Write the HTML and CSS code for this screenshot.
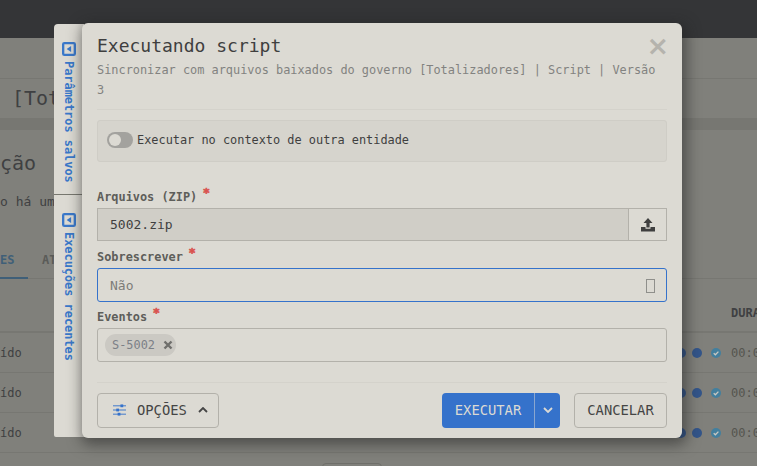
FILE: index.html
```html
<!DOCTYPE html>
<html lang="pt">
<head>
<meta charset="utf-8">
<title>Executando script</title>
<link rel="stylesheet" href="styles.css">
</head>
<body>
<div class="page">
  <header class="topbar"></header>
  <div class="crumbs"></div>
  <div class="page-title">[Totalizadores]</div>
  <div class="band"></div>
  <div class="section-title">ção</div>
  <div class="notice">o há um</div>
  <nav class="tabs"><span class="tab tab-on">ES</span><span class="tab">AT</span></nav>
  <div class="thead"><span>DURAÇÃO</span></div>
  <div class="row"><span>ído</span><span class="cells"><i class="dot"></i><i class="dot"></i><svg class="chk" viewBox="0 0 10 10"><circle cx="5" cy="5" r="5"/><path d="M2.700 5.200l1.700 1.600 3-3.200"/></svg><span class="time">00:00</span></span></div>
  <div class="row"><span>ído</span><span class="cells"><i class="dot"></i><i class="dot"></i><svg class="chk" viewBox="0 0 10 10"><circle cx="5" cy="5" r="5"/><path d="M2.700 5.200l1.700 1.600 3-3.200"/></svg><span class="time">00:00</span></span></div>
  <div class="row"><span>ído</span><span class="cells"><i class="dot"></i><i class="dot"></i><svg class="chk" viewBox="0 0 10 10"><circle cx="5" cy="5" r="5"/><path d="M2.700 5.200l1.700 1.600 3-3.200"/></svg><span class="time">00:00</span></span></div>
  <div class="pager"></div>
</div>

<aside class="side">
  <div class="side-sec side-first">
    <svg class="side-ico" viewBox="0 0 12 12"><rect x="1" y="1" width="10" height="10" rx="1"/><path class="tri" d="M7.800 3.400v5.200L4 6z"/></svg>
    <span class="side-text">Parâmetros salvos</span>
  </div>
  <div class="side-sec">
    <svg class="side-ico" viewBox="0 0 12 12"><rect x="1" y="1" width="10" height="10" rx="1"/><path class="tri" d="M7.800 3.400v5.200L4 6z"/></svg>
    <span class="side-text">Execuções recentes</span>
  </div>
</aside>

<main class="modal">
  <div class="modal-head">
    <h1 class="title">Executando script</h1>
    <span class="close">×</span>
    <p class="sub">Sincronizar com arquivos baixados do governo [Totalizadores] | Script | Versão 3</p>
  </div>
  <div class="ctx">
    <span class="toggle"><i class="knob"></i></span>
    <span>Executar no contexto de outra entidade</span>
  </div>
  <div class="fields">
    <label class="lab">Arquivos (ZIP)<b class="req">*</b></label>
    <div class="file">
      <span class="file-name">5002.zip</span>
      <span class="file-btn"><svg class="up" viewBox="0 0 14 14"><path d="M7 0l4.500 5H8.600v4.500H5.400V5H2.500z"/><path d="M0 9h4.500v1.800h5V9H14v4.500H0z"/></svg></span>
    </div>
    <label class="lab">Sobrescrever<b class="req">*</b></label>
    <div class="select"><span>Não</span><i class="tofu"></i></div>
    <label class="lab">Eventos<b class="req">*</b></label>
    <div class="tags"><span class="chip">S-5002<svg class="x" viewBox="0 0 10 10"><path d="M1.500 1.500l7 7M8.500 1.500l-7 7"/></svg></span></div>
  </div>
  <footer class="foot">
    <button class="btn btn-opt">
      <svg class="sliders" viewBox="0 0 14 12"><path d="M0 1.500h14M0 6h14M0 10.500h14"/><rect x="8" y="0" width="3" height="3"/><rect x="3.500" y="4.500" width="3" height="3"/><rect x="5" y="9" width="3" height="3"/></svg>
      <span>OPÇÕES</span>
      <svg class="chev" viewBox="0 0 10 6"><path d="M1 5l4-4 4 4"/></svg>
    </button>
    <span class="spacer"></span>
    <div class="split">
      <button class="btn-main">EXECUTAR</button>
      <button class="btn-caret"><svg class="chev chev-w" viewBox="0 0 10 6"><path d="M1 1l4 4 4-4"/></svg></button>
    </div>
    <button class="btn btn-cancel">CANCELAR</button>
  </footer>
</main>
</body>
</html>
```

FILE: styles.css
```css
* { box-sizing: border-box; }
html, body { margin: 0; height: 100%; }
body {
  width: 757px;
  height: 466px;
  overflow: hidden;
  position: relative;
  background: #80807b;
  font-family: "DejaVu Sans Mono", monospace;
  color: #3f3f3f;
}

/* dimmed page behind the dialog */
.page { width: 757px; height: 466px; overflow: hidden; color: #3f4042; }
.topbar { height: 38px; background: #343537; }
.crumbs { height: 41px; border-bottom: 1px solid #777772; }
.page-title { height: 39px; padding: 7px 0 0 12px; font-size: 20px; line-height: 24px; }
.band { height: 12px; background: #777772; }
.section-title { height: 56px; padding-top: 21px; font-size: 20px; line-height: 24px; }
.notice { height: 55px; padding-top: 7px; font-size: 13px; line-height: 18px; }
.tabs { display: flex; gap: 14px; height: 38px; padding-top: 10px; border-bottom: 1px solid #777772; font-size: 12px; font-weight: 700; line-height: 18px; }
.tab { color: #5a5b58; }
.tab-on { color: #3f5f78; width: 28px; height: 28px; border-bottom: 2px solid #3f5f78; }
.thead { height: 54px; padding: 25px 0 0 731px; border-bottom: 2px solid #777772; font-size: 12px; font-weight: 700; line-height: 18px; white-space: nowrap; }
.row { display: flex; justify-content: space-between; align-items: center; height: 40px; border-bottom: 1px solid #777772; font-size: 12px; white-space: nowrap; }
.cells { display: flex; align-items: center; gap: 6px; margin-right: -10px; }
.dot { width: 10px; height: 10px; border-radius: 50%; background: #33558a; }
.chk { width: 10px; height: 10px; margin-left: 3px; fill: #437f9e; }
.chk path { fill: none; stroke: #c8c8c2; stroke-width: 1.300; }
.time { margin-left: 4px; width: 36px; color: #55554f; }
.pager { width: 60px; height: 20px; margin: 10px 0 0 322px; border: 1px solid #6f6f6a; border-radius: 4px; }

/* side tabs */
.side {
  position: absolute;
  left: 54px;
  top: 24px;
  width: 30px;
  height: 413px;
  display: flex;
  flex-direction: column;
  background: linear-gradient(90deg, #dcdad3 0, #dcdad3 22px, #d5d3cc 28px);
  border-radius: 4px 0 0 2px;
}
.side-sec { display: flex; flex-direction: column; align-items: flex-start; padding: 18px 0 0 8px; gap: 5px; }
.side-first { height: 171px; border-bottom: 1px solid #77776f; }
.side-ico { width: 14px; height: 14px; stroke: #3a78c9; stroke-width: 2; fill: none; flex: none; }
.side-ico .tri { fill: #3a78c9; stroke: none; }
.side-text {
  margin-left: 1px;
  writing-mode: vertical-rl;
  font-size: 11.900px;
  font-weight: 700;
  line-height: 12px;
  color: #3a78c9;
  white-space: nowrap;
}

/* dialog */
.modal {
  position: absolute;
  left: 82px;
  top: 23px;
  width: 600px;
  height: 415px;
  display: flex;
  flex-direction: column;
  padding: 0 15px;
  background: #dcdad3;
  border-radius: 6px;
  box-shadow: 2px 4px 14px 3px rgba(30, 30, 30, .5);
}
.modal-head { position: relative; height: 87px; padding-top: 12px; border-bottom: 1px solid #d4d2cb; }
.title { margin: 0; font-size: 18px; font-weight: 400; line-height: 22px; color: #3f3f3f; }
.close { position: absolute; right: -2px; top: 8px; font-family: "DejaVu Sans", sans-serif; font-size: 27px; font-weight: 700; line-height: 30px; color: #b5b3ad; }
.sub { margin: 3px 0 0; font-size: 11.900px; line-height: 20px; color: #828280; }
.ctx {
  display: flex;
  align-items: center;
  gap: 4px;
  height: 42px;
  margin-top: 10px;
  padding: 0 0 2px 9px;
  background: #d6d4cd;
  border: 1px solid #cfcdc6;
  border-radius: 3px;
  font-size: 11.900px;
}
.toggle { position: relative; width: 26px; height: 16px; border-radius: 8px; background: #a3a29e; }
.knob { position: absolute; left: 2px; top: 2px; width: 12px; height: 12px; border-radius: 50%; background: #dcdad3; }
.fields { flex: 1; display: flex; flex-direction: column; padding-top: 24px; border-bottom: 1px solid #d4d2cb; }
.lab { display: block; height: 22px; font-size: 11.900px; font-weight: 700; line-height: 22px; color: #5e5e5a; white-space: nowrap; }
.req { position: relative; top: -4px; margin-left: 6px; font-family: "DejaVu Sans", sans-serif; font-size: 12px; line-height: 10px; color: #d9534f; -webkit-text-stroke: .6px #d9534f; }
.file { display: flex; flex: none; height: 33px; margin-bottom: 5px; border: 1px solid #b3b1aa; font-size: 13px; }
.file-name { flex: 1; display: flex; align-items: center; padding-left: 12px; background: #d0cec7; color: #3f3f3f; }
.file-btn { display: flex; align-items: center; justify-content: center; width: 38px; border-left: 1px solid #b3b1aa; }
.up { width: 14px; height: 14px; fill: #3f3f3f; }
.select { display: flex; flex: none; align-items: center; justify-content: space-between; height: 34px; margin-bottom: 4px; padding: 0 11px 0 12px; border: 1px solid #3572cb; border-radius: 3px; font-size: 13px; color: #7c7c78; }
.tofu { width: 9px; height: 14px; margin-top: 2px; border: 2px solid #8f8f8b; border-width: 1.500px; }
.tags { flex: none; height: 34px; padding: 5px 7px; border: 1px solid #b3b1aa; border-radius: 3px; }
.chip { display: inline-flex; align-items: center; gap: 8px; height: 22px; padding: 0 3px 0 7px; border-radius: 11px; background: #cbc9c3; font-size: 11.900px; color: #7b8087; }
.x { width: 10px; height: 10px; stroke: #6f6f6c; stroke-width: 2.400; fill: none; }
.foot { display: flex; align-items: flex-start; height: 55px; padding-top: 10px; flex: none; }
.spacer { flex: 1; }
.btn { height: 35px; border: 1px solid #b3b1aa; border-radius: 4px; background: transparent; font-family: inherit; font-size: 13.800px; color: #454545; }
.btn-opt { display: flex; align-items: center; width: 122px; padding: 0 0 2px 15px; gap: 11px; }
.sliders { width: 13px; height: 12px; stroke: #3572cb; fill: #3572cb; stroke-width: 1; }
.sliders rect { stroke: none; }
.chev { width: 10px; height: 6px; stroke: #454545; stroke-width: 1.800; fill: none; }
.chev-w { stroke: #dcdad3; }
.split { display: flex; width: 118px; height: 35px; border-radius: 4px; overflow: hidden; background: #3572cb; margin-right: 14px; }
.btn-main { width: 93px; padding: 0 0 2px; border: 0; border-right: 1px solid #8aa6cf; background: transparent; font-family: inherit; font-size: 13.800px; color: #dcdad3; }
.btn-caret { flex: 1; display: flex; align-items: center; justify-content: center; padding: 0 0 2px; border: 0; background: transparent; }
.btn-cancel { width: 93px; padding: 0 0 2px; }
```
